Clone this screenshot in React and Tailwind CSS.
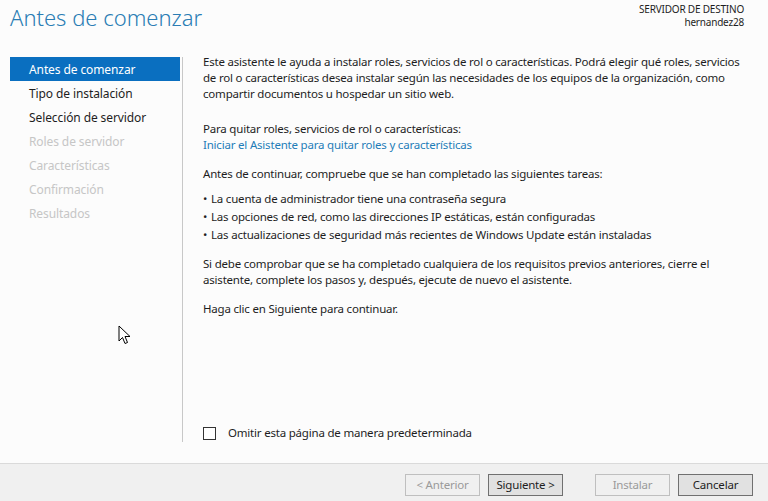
import React from "react";

const steps = [
  { label: "Antes de comenzar", state: "active" },
  { label: "Tipo de instalación", state: "normal" },
  { label: "Selección de servidor", state: "normal" },
  { label: "Roles de servidor", state: "disabled" },
  { label: "Características", state: "disabled" },
  { label: "Confirmación", state: "disabled" },
  { label: "Resultados", state: "disabled" },
];

function Cursor() {
  return (
    <svg className="absolute left-[118px] top-[325px]" width="14" height="21" viewBox="0 0 14 21">
      <path
        d="M1 1 L1 16 L4.5 12.5 L7 18.5 L9.5 17.5 L7 11.5 L12 11.5 Z"
        fill="#fff"
        stroke="#000"
        strokeWidth="1"
      />
    </svg>
  );
}

export default function App() {
  return (
    <div
      className="relative w-[768px] h-[501px] bg-[#fcfcfc] flex flex-col text-[11.5px] tracking-[-0.2px] text-[#1e1e1e] overflow-hidden"
      style={{ fontFamily: '"Noto Sans", "Liberation Sans", sans-serif' }}
    >
      {/* header */}
      <div className="flex justify-between h-[57px] pl-[10px] pr-[24px]">
        <h1 className="text-[22px] font-light text-[#2a7db4] leading-none pt-[6px] tracking-[0px]">
          Antes de comenzar
        </h1>
        <div className="text-right text-[10px] tracking-[-0.2px] leading-[13px] pt-[3px]">
          <div>SERVIDOR DE DESTINO</div>
          <div>hernandez28</div>
        </div>
      </div>

      <div className="flex flex-1">
        {/* sidebar */}
        <div className="w-[173px] ml-[10px] border-r border-[#c8c8c8] h-[385px]">
          {steps.map((s) => (
            <div
              key={s.label}
              className={
                "h-[24px] flex items-center pt-[2px] pl-[19px] text-[12px] tracking-[-0.1px] " +
                (s.state === "active"
                  ? "bg-[#0a6fc0] text-white mr-[2px]"
                  : s.state === "normal"
                  ? "text-[#1e1e1e]"
                  : "text-[#c6c6c6]")
              }
            >
              {s.label}
            </div>
          ))}
        </div>

        {/* content */}
        <div className="flex-1 pl-[20px] pr-[16px] pt-[1px] flex flex-col leading-[16px]">
          <p className="-mt-[4px]">
            Este asistente le ayuda a instalar roles, servicios de rol o características. Podrá elegir qué roles, servicios
            de rol o características desea instalar según las necesidades de los equipos de la organización, como
            compartir documentos u hospedar un sitio web.
          </p>
          <p className="mt-[19px]">Para quitar roles, servicios de rol o características:</p>
          <p className="text-[#1f7db8]">Iniciar el Asistente para quitar roles y características</p>
          <p className="mt-[13px]">Antes de continuar, compruebe que se han completado las siguientes tareas:</p>
          <ul className="mt-[9px] flex flex-col gap-[2px]">
            <li className="flex"><span className="w-[8px]">•</span>La cuenta de administrador tiene una contraseña segura</li>
            <li className="flex"><span className="w-[8px]">•</span>Las opciones de red, como las direcciones IP estáticas, están configuradas</li>
            <li className="flex"><span className="w-[8px]">•</span>Las actualizaciones de seguridad más recientes de Windows Update están instaladas</li>
          </ul>
          <p className="mt-[13px]">
            Si debe comprobar que se ha completado cualquiera de los requisitos previos anteriores, cierre el
            asistente, complete los pasos y, después, ejecute de nuevo el asistente.
          </p>
          <p className="mt-[13px]">Haga clic en Siguiente para continuar.</p>

          <label className="mt-auto mb-[22px] flex items-center gap-[12px]">
            <span className="w-[13px] h-[13px] border border-[#333] bg-white" />
            <span>Omitir esta página de manera predeterminada</span>
          </label>
        </div>
      </div>

      {/* footer */}
      <div className="h-[38px] bg-[#f0f0f0] border-t border-[#dadada] flex items-start pt-[10px] justify-end pr-[15px] gap-[8px]">
        <button className="w-[75px] h-[22px] border border-[#bfbfbf] bg-[#f0f0f0] text-[#9a9a9a]">&lt; Anterior</button>
        <button className="w-[75px] h-[22px] border border-[#707070] bg-[#e1e1e1] text-[#1e1e1e]">Siguiente &gt;</button>
        <button className="w-[75px] h-[22px] border border-[#bfbfbf] bg-[#f0f0f0] text-[#9a9a9a] ml-[24px]">Instalar</button>
        <button className="w-[75px] h-[22px] border border-[#707070] bg-[#e1e1e1] text-[#1e1e1e]">Cancelar</button>
      </div>

      <Cursor />
    </div>
  );
}
